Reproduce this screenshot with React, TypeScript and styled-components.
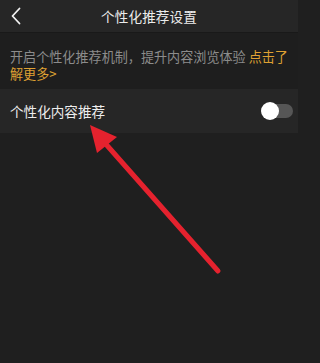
import React from 'react';
import styled, { createGlobalStyle } from 'styled-components';

const GlobalStyle = createGlobalStyle`
  html, body {
    margin: 0;
    padding: 0;
    background: #1f1f1f;
  }
  body {
    font-family: "Noto Sans CJK SC", "Noto Sans", sans-serif;
  }
`;

const Page = styled.div`
  position: relative;
  width: 298px;
  height: 363px;
  overflow: hidden;
  background: #1f1f1f;
`;

const Header = styled.div`
  position: relative;
  height: 32px;
  display: flex;
  align-items: center;
  justify-content: center;
  background: #262626;
  border-bottom: 1px solid #191919;
`;

const BackButton = styled.button`
  position: absolute;
  left: 6px;
  top: 4px;
  width: 20px;
  height: 24px;
  padding: 0;
  border: none;
  background: none;
  display: flex;
  align-items: center;
  justify-content: center;
`;

const Title = styled.h1`
  margin: 0;
  font-size: 13.6px;
  font-weight: 400;
  color: #ececec;
  letter-spacing: 0.1px;
`;

const Intro = styled.p`
  margin: 0;
  padding: 15px 6px 7px 10px;
  background: #1e1e1e;
  font-size: 13.1px;
  line-height: 17px;
  color: #8c8c8c;
`;

const Link = styled.span`
  color: #dfa133;
`;

const Row = styled.div`
  height: 44px;
  display: flex;
  align-items: center;
  justify-content: space-between;
  padding: 0 5px 0 10px;
  background: #262626;
`;

const Label = styled.span`
  font-size: 13.6px;
  color: #ededed;
`;

const Track = styled.div<{ $on: boolean }>`
  position: relative;
  width: 30px;
  height: 14px;
  border-radius: 7px;
  background: ${p => (p.$on ? '#dfa133' : '#565656')};
`;

const Knob = styled.div<{ $on: boolean }>`
  position: absolute;
  top: -2px;
  left: ${p => (p.$on ? '14px' : '-2px')};
  width: 18px;
  height: 18px;
  border-radius: 50%;
  background: #ffffff;
`;

const Annotation = styled.svg`
  position: absolute;
  left: 0;
  top: 0;
  pointer-events: none;
`;

const Switch = ({ on }: { on: boolean }) => (
  <Track $on={on}>
    <Knob $on={on} />
  </Track>
);

const App = () => {
  return (
    <>
      <GlobalStyle />
      <Page>
        <Header>
          <BackButton aria-label="back">
            <svg width="12" height="18" viewBox="0 0 12 18">
              <path d="M9.5 1.5 L2.5 9 L9.5 16.5" fill="none" stroke="#f2f2f2" strokeWidth="1.8" strokeLinecap="round" strokeLinejoin="round" />
            </svg>
          </BackButton>
          <Title>个性化推荐设置</Title>
        </Header>
        <Intro>
          开启个性化推荐机制，提升内容浏览体验 <Link>点击了解更多&gt;</Link>
        </Intro>
        <Row>
          <Label>个性化内容推荐</Label>
          <Switch on={false} />
        </Row>
        <Annotation width="298" height="363" viewBox="0 0 298 363">
          <line x1="218" y1="271" x2="104" y2="142" stroke="#e5222e" strokeWidth="5" strokeLinecap="round" />
          <polygon points="90,125 117,137 97,153" fill="#e5222e" />
        </Annotation>
      </Page>
    </>
  );
};

export default App;
